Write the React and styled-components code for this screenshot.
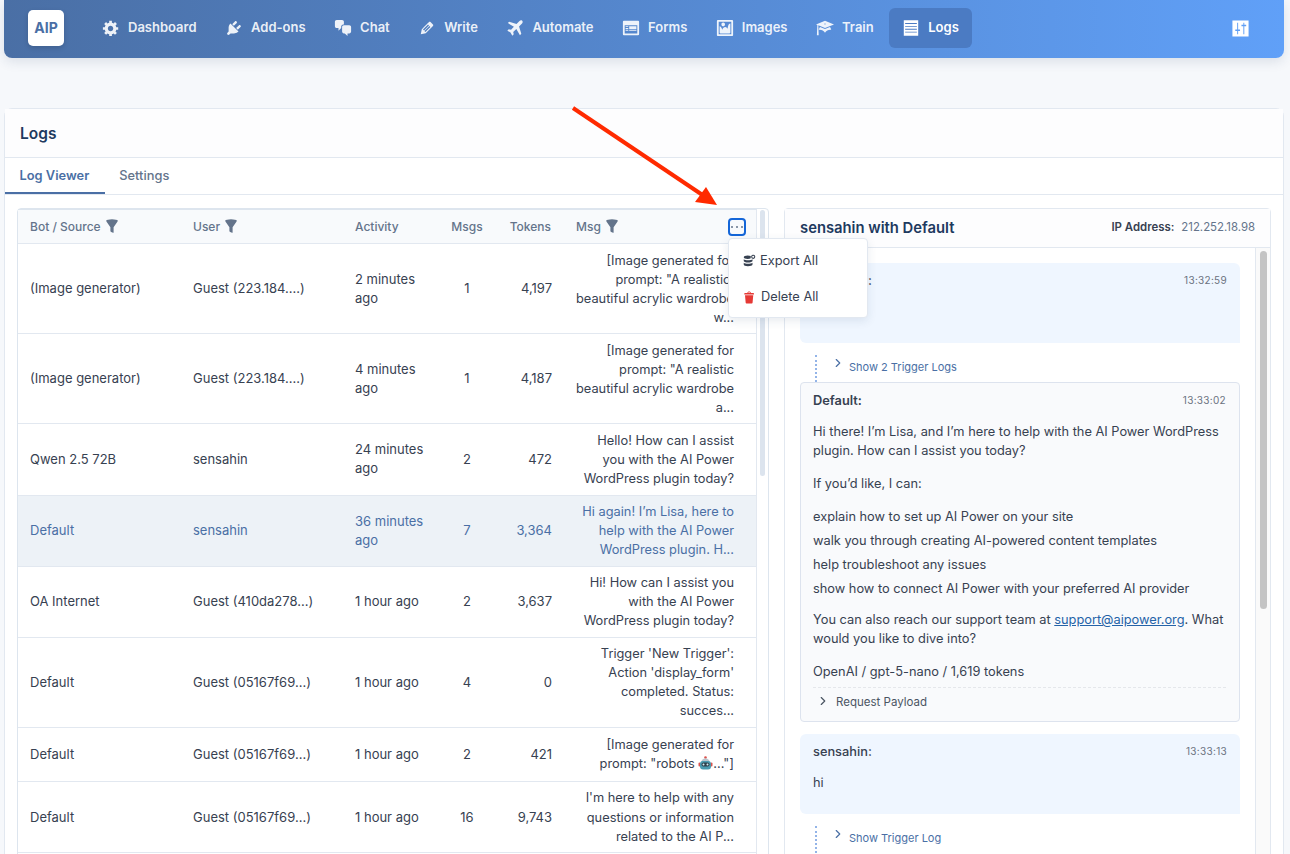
import React from 'react'
import styled, { createGlobalStyle } from 'styled-components'
import { ChevronRight } from 'lucide-react'

const ICONS = {
  gear: 'M18 12h-2.18c-.17.7-.44 1.35-.81 1.93l1.54 1.54-2.1 2.1-1.54-1.54c-.58.36-1.23.63-1.91.79V19H8v-2.18c-.68-.16-1.33-.43-1.91-.79l-1.54 1.54-2.12-2.12 1.54-1.54c-.36-.58-.63-1.23-.79-1.91H1V9.03h2.17c.16-.7.44-1.35.8-1.94L2.43 5.55l2.1-2.1 1.54 1.54c.58-.37 1.24-.64 1.93-.81V2h3v2.18c.68.16 1.33.43 1.91.79l1.54-1.54 2.12 2.12-1.54 1.54c.36.59.64 1.24.8 1.94H18V12zm-8.5 1.5c1.66 0 3-1.34 3-3s-1.34-3-3-3-3 1.34-3 3 1.34 3 3 3z',
  plug: 'M13.11 4.36L9.87 7.6 8 5.73l3.24-3.24c.35-.34 1.05-.2 1.56.32.52.51.66 1.21.31 1.55zm-8 1.77l.91-1.12 9.01 9.01-1.19.84c-.71.71-2.63 1.16-3.82 1.16H6.14L4.9 17.26c-.59.59-1.54.59-2.12 0-.59-.58-.59-1.53 0-2.12l1.24-1.24v-3.88c0-1.13.4-3.19 1.09-3.89zm7.26 3.97l3.24-3.24c.34-.35 1.04-.21 1.55.31.52.51.66 1.21.31 1.55l-3.24 3.25z',
  chat: 'M11 6h-.82C9.07 6 8 7.2 8 8.16V10l-3 3v-3H3c-1.1 0-2-.9-2-2V3c0-1.1.9-2 2-2h6c1.1 0 2 .9 2 2v3zm0 1h6c1.1 0 2 .9 2 2v5c0 1.1-.9 2-2 2h-2v3l-3-3h-1c-1.1 0-2-.9-2-2V9c0-1.1.9-2 2-2z',
  pencil: 'M13.89 3.39l2.71 2.72c.46.46.42 1.24.03 1.64l-8.01 8.02-5.56 1.16 1.16-5.58s7.6-7.63 7.99-8.03c.39-.39 1.22-.39 1.68.07zm-2.73 2.79l-5.59 5.61 1.11 1.11 5.54-5.65zm-2.97 8.23l5.58-5.6-1.07-1.08-5.59 5.6z',
  plane: 'M18 2c-.8-.8-2.2-.6-3 .2L11.700 5.500 3.500 3 2 4.500 8.800 8.500 5.600 12 3 11.400 1.500 13 5 15l2 3.500 1.600-1.500L8 14.400 11.500 11.200 15.500 18 17 16.500 14.500 8.300 17.800 5c.8-.8 1-2.200.2-3z',
  form: 'M2 2h16c.55 0 1 .45 1 1v14c0 .55-.45 1-1 1H2c-.55 0-1-.45-1-1V3c0-.55.45-1 1-1zm15 14V7H3v9h14zM4 8v1h3V8H4zm4 0v3h8V8H8zm-4 2v1h3v-1H4zm0 2v1h3v-1H4zm4 0v1h8v-1H8z',
  image: 'M2.25 1h15.5c.69 0 1.25.56 1.25 1.25v15.5c0 .69-.56 1.25-1.25 1.25H2.25C1.56 19 1 18.44 1 17.75V2.25C1 1.56 1.56 1 2.25 1zM17 17V3H3v14h14zM10 6c0-1.1-.9-2-2-2s-2 .9-2 2 .9 2 2 2 2-.9 2-2zm3 5s0-6 3-6v10c0 .55-.45 1-1 1H5c-.55 0-1-.45-1-1V8c2 0 3 4 3 4s1-3 3-3 3 2 3 2z',
  learn: 'M10 10L2.54 7.02 3 18H1l.48-11.41L0 6l10-4 10 4zm0-5c-.55 0-1 .22-1 .5s.45.5 1 .5 1-.22 1-.5-.45-.5-1-.5zm0 6l5.57-2.23c.71.94 1.2 2.07 1.36 3.3-.3-.04-.61-.07-.93-.07-2.55 0-4.78 1.37-6 3.41C8.78 13.37 6.55 12 4 12c-.32 0-.63.03-.93.07.16-1.23.65-2.36 1.36-3.3z',
  list: 'M2 1.500h16v17H2zM3.500 4.500v1h13v-1zm0 3.200v1h13v-1zm0 3.200v1h13v-1zm0 3.200v1h13v-1z',
  sliders: 'M1.500 1.500h17v17h-17zM6.500 4h1v7h2v1.500h-2V16h-1v-3.500h-2V11h2zM13 4h1v2h2v1.500h-2V16h-1V7.500h-2V6h2z',
  filter: 'M3 4.5v-2s3.34-1 7-1 7 1 7 1v2l-5 7.03v6.97s-1.22-.09-2.25-.59S8 16.5 8 16.5v-4.970z',
  trash: 'M12 4h3c.6 0 1 .4 1 1v1H3V5c0-.6.5-1 1-1h3c.2-1.100 1.300-2 2.500-2s2.300.9 2.500 2zM8 4h3c-.2-.6-.9-1-1.500-1S8.200 3.400 8 4zM4 7h11l-.9 10.100c0 .5-.5.9-1 .9H5.900c-.5 0-.9-.4-1-.9z',
  database: 'M8 2c2 0 3.500.3 4.500 1v3c-1 .7-2.500 1-4.500 1-3 0-5.500-1-5.500-2.500S5 2 8 2zM16 1a3 3 0 1 1 0 6 3 3 0 1 1 0-6zM16 2.500a1.500 1.500 0 1 0 0 3 1.500 1.500 0 1 0 0-3zM2.500 7.500C3.500 8.500 6 9 8.500 9s5.500-.5 6.500-1.500V10c0 1.200-3 2.200-6.500 2.200S2.500 11.200 2.500 10zM2.500 12.500c1 1 3.500 1.500 6 1.500s5.500-.5 6.500-1.500V15c0 1.500-3 2.500-6.500 2.500S2.500 16.500 2.500 15z',
}

const NAV_ITEMS = [
  { label: 'Dashboard', icon: 'gear' },
  { label: 'Add-ons', icon: 'plug' },
  { label: 'Chat', icon: 'chat' },
  { label: 'Write', icon: 'pencil' },
  { label: 'Automate', icon: 'plane' },
  { label: 'Forms', icon: 'form' },
  { label: 'Images', icon: 'image' },
  { label: 'Train', icon: 'learn' },
  { label: 'Logs', icon: 'list', active: true },
]

const RobotFace = () => (
  <svg width="15" height="14" viewBox="0 0 15 14" style={{ verticalAlign: '-2px' }}>
    <circle cx="7.500" cy="1.500" r="1.300" fill="#d9534f" />
    <path d="M3 7a4.500 4.500 0 0 1 9 0z" fill="#b9c4cc" />
    <rect x="0.500" y="6.500" width="2" height="4" rx="1" fill="#d9534f" />
    <rect x="12.500" y="6.500" width="2" height="4" rx="1" fill="#d9534f" />
    <rect x="2" y="5" width="11" height="8.500" rx="3" fill="#4a9bb0" />
    <rect x="3.500" y="6.500" width="8" height="4" rx="2" fill="#2f3f4a" />
    <circle cx="5.500" cy="8.500" r="1" fill="#cfeef5" />
    <circle cx="9.500" cy="8.500" r="1" fill="#cfeef5" />
  </svg>
)

const ROWS = [
  { bot: '(Image generator)', user: 'Guest (223.184....)', activity: '2 minutes ago', msgs: '1', tokens: '4,197', msg: '[Image generated for prompt: "A realistic, beautiful acrylic wardrobe w...' },
  { bot: '(Image generator)', user: 'Guest (223.184....)', activity: '4 minutes ago', msgs: '1', tokens: '4,187', msg: '[Image generated for prompt: "A realistic beautiful acrylic wardrobe a...' },
  { bot: 'Qwen 2.5 72B', user: 'sensahin', activity: '24 minutes ago', msgs: '2', tokens: '472', msg: 'Hello! How can I assist you with the AI Power WordPress plugin today?' },
  { bot: 'Default', user: 'sensahin', activity: '36 minutes ago', msgs: '7', tokens: '3,364', msg: 'Hi again! I’m Lisa, here to help with the AI Power WordPress plugin. H...', selected: true },
  { bot: 'OA Internet', user: 'Guest (410da278...)', activity: '1 hour ago', msgs: '2', tokens: '3,637', msg: 'Hi! How can I assist you with the AI Power WordPress plugin today?' },
  { bot: 'Default', user: 'Guest (05167f69...)', activity: '1 hour ago', msgs: '4', tokens: '0', msg: "Trigger 'New Trigger': Action 'display_form' completed. Status: succes..." },
  { bot: 'Default', user: 'Guest (05167f69...)', activity: '1 hour ago', msgs: '2', tokens: '421', msg: <>[Image generated for prompt: "robots <RobotFace />..."]</> },
  { bot: 'Default', user: 'Guest (05167f69...)', activity: '1 hour ago', msgs: '16', tokens: '9,743', msg: "I'm here to help with any questions or information related to the AI P..." },
]

const GlobalStyle = createGlobalStyle`
  html, body {
    margin: 0;
    padding: 0;
    background: #f6f8fb;
  }
  * {
    box-sizing: border-box;
  }
`

const Page = styled.div`
  position: relative;
  height: 854px;
  overflow: hidden;
  padding: 0 6px 0 4px;
  font-family: Inter, "Liberation Sans", sans-serif;
  font-size: 13px;
  line-height: 19.05px;
  color: #374151;
`

const Navbar = styled.header`
  display: flex;
  align-items: center;
  height: 58px;
  padding: 0 34px 2px 24px;
  border-radius: 0 0 8px 8px;
  background: linear-gradient(90deg, #4a6fa5 0%, #60a0f8 100%);
  box-shadow: 0 4px 12px rgba(30, 58, 95, 0.12);
`

const Logo = styled.div`
  display: flex;
  align-items: center;
  justify-content: center;
  width: 36px;
  height: 36px;
  margin-right: 24.5px;
  border-radius: 5px;
  background: #fff;
  color: #4a6fa5;
  font-size: 14px;
  font-weight: 700;
  box-shadow: 0 2px 5px rgba(0, 0, 0, 0.15);
`

const NavList = styled.nav`
  display: flex;
  align-items: center;
  gap: 1.5px;
  flex: 1;
`

const NavItem = styled.a`
  display: flex;
  align-items: center;
  gap: 8px;
  height: 40px;
  padding: 0 13.5px;
  border-radius: 6px;
  background: ${p => (p.$active ? '#4b7bc3' : 'transparent')};
  color: ${p => (p.$active ? '#fff' : 'rgba(255, 255, 255, 0.9)')};
  font-size: 13px;
  font-weight: 600;
`

const Card = styled.section`
  margin-top: 50px;
  border: 1px solid #e2e8f0;
  border-radius: 8px 8px 0 0;
  background: #fff;
`

const CardTitle = styled.h1`
  margin: 0;
  height: 49px;
  padding: 0 15px;
  border-bottom: 1px solid #e2e8f0;
  background: #fdfdfe;
  color: #1e3a5f;
  font-size: 15.5px;
  font-weight: 600;
  line-height: 49px;
`

const Tabs = styled.div`
  display: flex;
  height: 37px;
  border-bottom: 1px solid #e2e8f0;
`

const Tab = styled.div`
  height: 36px;
  padding: 0 15.5px 0 14.5px;
  border-bottom: 2px solid ${p => (p.$active ? '#4a6fa5' : 'transparent')};
  color: ${p => (p.$active ? '#4a6fa5' : '#64748b')};
  font-size: 12.85px;
  font-weight: ${p => (p.$active ? 600 : 500)};
  line-height: 35px;
`

const Content = styled.div`
  display: flex;
  gap: 15px;
  padding: 13px 12px 0;
`

const LeftPanel = styled.div`
  position: relative;
  display: flex;
  flex: none;
  width: 752px;
  border: 1px solid #dde5ee;
  border-radius: 4px 4px 0 0;
`

const Table = styled.div`
  width: 739px;
  border-top: 1px solid #dde5ee;
  border-right: 1px solid #e2e8f0;
`

const TableHead = styled.div`
  position: relative;
  display: grid;
  grid-template-columns: 163px 162px 96px 56px 69px 1fr;
  align-items: center;
  height: 34px;
  border-bottom: 1px solid #e2e8f0;
  background: #f8fafc;
  color: #64748b;
  font-size: 12px;
  font-weight: 500;
`

const HeadCell = styled.div`
  display: flex;
  align-items: center;
  justify-content: ${p => (p.$align === 'center' ? 'center' : p.$align === 'right' ? 'flex-end' : 'flex-start')};
  gap: 3px;
  padding: 0 ${p => (p.$align === 'center' ? '0' : p.$align === 'right' ? '13px' : '12px')};
`

const TableRow = styled.div`
  display: grid;
  grid-template-columns: 163px 162px 96px 56px 69px 1fr;
  align-items: center;
  min-height: 54px;
  border-bottom: 1px solid #e2e8f0;
  background: ${p => (p.$selected ? '#edf2f7' : '#fff')};
  color: ${p => (p.$selected ? '#4a6fa5' : '#374151')};
`

const Cell = styled.div`
  padding: 6.5px 12px;
  text-align: ${p => p.$align || 'left'};
`

const MsgCell = styled.div`
  padding: 6.5px 22px 6.5px 11px;
  font-size: 12.8px;
  text-align: right;
`

const ActionsButton = styled.button`
  position: absolute;
  top: 8px;
  left: 710px;
  display: flex;
  align-items: center;
  justify-content: center;
  gap: 2.5px;
  width: 18px;
  height: 18px;
  padding: 0;
  border: 2px solid #1466d8;
  border-radius: 4px;
  background: transparent;
`

const Dot = styled.span`
  flex: none;
  width: 2.5px;
  height: 2.5px;
  border-radius: 50%;
  background: #64748b;
`

const Rail = styled.div`
  flex: none;
  width: 11px;
  padding: 1px 3px 0;
`

const RailThumb = styled.div`
  width: 5px;
  height: 266px;
  border-radius: 3px;
  background: #dce4ee;
`

const Menu = styled.div`
  position: absolute;
  top: 29px;
  left: 710px;
  width: 140px;
  height: 80px;
  padding: 4px 0;
  border: 1px solid #e2e8f0;
  border-radius: 4px;
  background: #fff;
  box-shadow: 0 3px 10px rgba(30, 58, 95, 0.1);
  z-index: 2;
`

const MenuItem = styled.div`
  display: flex;
  align-items: center;
  gap: 4px;
  height: 36px;
  padding: 0 13px;
  color: #374151;
  font-size: 12.8px;
`

const RightPanel = styled.div`
  flex: 1;
  border: 1px solid #e2e8f0;
  border-radius: 4px 4px 0 0;
  height: 700px;
`

const PanelHeader = styled.div`
  display: flex;
  align-items: center;
  justify-content: space-between;
  height: 39px;
  padding: 0 15px;
  border-bottom: 1px solid #e2e8f0;
  background: #fdfdfe;
`

const PanelTitle = styled.h2`
  margin: 1px 0 0;
  color: #1e3a5f;
  font-size: 14.8px;
  font-weight: 600;
`

const IpBlock = styled.div`
  display: flex;
  gap: 7px;
  font-size: 11.4px;
  color: #64748b;
`

const IpLabel = styled.span`
  color: #374151;
  font-weight: 600;
`

const PanelBody = styled.div`
  display: flex;
`

const Thread = styled.div`
  flex: 1;
  padding: 15px 15px 0;
  font-size: 12.8px;
  line-height: 19px;
`

const ScrollTrack = styled.div`
  flex: none;
  width: 15px;
  height: 640px;
  padding: 3px 3px 0 4px;
  border-left: 1px solid #e2e8f0;
  background: #fafafa;
`

const ScrollThumb = styled.div`
  height: 358px;
  border-radius: 4px;
  background: #c4c4c4;
`

const UserBubble = styled.div`
  height: 80px;
  padding: 8px 13px;
  border-radius: 6px 6px 0 6px;
  background: #eff6ff;
`

const BotBox = styled.div`
  height: 340px;
  margin-bottom: 12px;
  padding: 8px 13px 8px 12px;
  border: 1px solid #dde3ee;
  border-radius: 4px;
  background: #f9fafc;
`

const MessageHead = styled.div`
  display: flex;
  align-items: center;
  justify-content: space-between;
  margin-bottom: ${p => (p.$bot ? '12px' : '11.5px')};
  font-weight: ${p => (p.$bot ? 600 : 500)};
`

const Time = styled.span`
  color: #6b7280;
  font-size: 10px;
  font-weight: 400;
  letter-spacing: 0.3px;
`

const Para = styled.p`
  margin: 0 0 14px;
`

const PlainList = styled.ul`
  margin: 0 0 12px;
  padding: 0;
  list-style: none;
`

const PlainItem = styled.li`
  margin-bottom: 5px;
`

const MailLink = styled.a`
  color: #2563a8;
  text-decoration: underline;
`

const PayloadRow = styled.div`
  display: flex;
  align-items: center;
  gap: 6px;
  margin-top: -8px;
  padding: 5px 0 0 3px;
  border-top: 1px dashed #e5e7eb;
  color: #4b5563;
  font-size: 11.5px;
`

const TriggerRow = styled.div`
  display: flex;
  align-items: center;
  gap: 4.5px;
  height: 27px;
  margin: 12px 0 0 15px;
  padding: 0 0 3px 13.5px;
  border-left: 2px dotted #93b4e8;
  color: #4a6fa5;
  font-size: 11px;
`

const Chevron = styled(ChevronRight)`
  flex: none;
  margin-bottom: ${p => p.$raise}px;
`

const Annotation = styled.svg`
  position: absolute;
  top: 0;
  left: 0;
  width: 1290px;
  height: 854px;
  pointer-events: none;
  z-index: 3;
`

const Icon = ({ name, size = 18, color = 'currentColor' }) => (
  <svg width={size} height={size} viewBox="0 0 20 20" fill={color} fillRule="evenodd" style={{ flex: 'none' }}>
    <path d={ICONS[name]} />
  </svg>
)

const App = () => {
  return (
    <Page>
      <GlobalStyle />
      <Navbar>
        <Logo>AIP</Logo>
        <NavList>
          {NAV_ITEMS.map(item => (
            <NavItem key={item.label} $active={item.active}>
              <Icon name={item.icon} />
              {item.label}
            </NavItem>
          ))}
        </NavList>
        <Icon name="sliders" size={19} color="#fff" />
      </Navbar>

      <Card>
        <CardTitle>Logs</CardTitle>
        <Tabs>
          <Tab $active>Log Viewer</Tab>
          <Tab>Settings</Tab>
        </Tabs>
        <Content>
          <LeftPanel>
            <Table>
              <TableHead>
                <HeadCell>Bot / Source <Icon name="filter" size={16} /></HeadCell>
                <HeadCell>User <Icon name="filter" size={16} /></HeadCell>
                <HeadCell>Activity</HeadCell>
                <HeadCell $align="center">Msgs</HeadCell>
                <HeadCell $align="right">Tokens</HeadCell>
                <HeadCell>Msg <Icon name="filter" size={16} /></HeadCell>
                <ActionsButton aria-label="Actions"><Dot /><Dot /><Dot /></ActionsButton>
              </TableHead>
              {ROWS.map((row, i) => (
                <TableRow key={i} $selected={row.selected}>
                  <Cell>{row.bot}</Cell>
                  <Cell>{row.user}</Cell>
                  <Cell>{row.activity}</Cell>
                  <Cell $align="center">{row.msgs}</Cell>
                  <Cell $align="right">{row.tokens}</Cell>
                  <MsgCell>{row.msg}</MsgCell>
                </TableRow>
              ))}
            </Table>
            <Rail><RailThumb /></Rail>
            <Menu>
              <MenuItem><Icon name="database" size={14} color="#374151" /> Export All</MenuItem>
              <MenuItem><Icon name="trash" size={15} color="#e53935" /> Delete All</MenuItem>
            </Menu>
          </LeftPanel>

          <RightPanel>
            <PanelHeader>
              <PanelTitle>sensahin with Default</PanelTitle>
              <IpBlock><IpLabel>IP Address:</IpLabel> 212.252.18.98</IpBlock>
            </PanelHeader>
            <PanelBody>
              <Thread>
                <UserBubble>
                  <MessageHead>sensahin: <Time>13:32:59</Time></MessageHead>
                </UserBubble>
                <TriggerRow><Chevron size={14} $raise={8} /> Show 2 Trigger Logs</TriggerRow>
                <BotBox>
                  <MessageHead $bot>Default: <Time>13:33:02</Time></MessageHead>
                  <Para>Hi there! I’m Lisa, and I’m here to help with the AI Power WordPress plugin. How can I assist you today?</Para>
                  <Para>If you’d like, I can:</Para>
                  <PlainList>
                    <PlainItem>explain how to set up AI Power on your site</PlainItem>
                    <PlainItem>walk you through creating AI-powered content templates</PlainItem>
                    <PlainItem>help troubleshoot any issues</PlainItem>
                    <PlainItem>show how to connect AI Power with your preferred AI provider</PlainItem>
                  </PlainList>
                  <Para>You can also reach our support team at <MailLink>support@aipower.org</MailLink>. What would you like to dive into?</Para>
                  <Para>OpenAI / gpt-5-nano / 1,619 tokens</Para>
                  <PayloadRow><Chevron size={14} $raise={4} /> Request Payload</PayloadRow>
                </BotBox>
                <UserBubble>
                  <MessageHead>sensahin: <Time>13:33:13</Time></MessageHead>
                  <Para>hi</Para>
                </UserBubble>
                <TriggerRow><Chevron size={14} $raise={8} /> Show Trigger Log</TriggerRow>
              </Thread>
              <ScrollTrack><ScrollThumb /></ScrollTrack>
            </PanelBody>
          </RightPanel>
        </Content>
      </Card>

      <Annotation viewBox="0 0 1290 854">
        <line x1="573" y1="108" x2="704" y2="196" stroke="#ff2a00" strokeWidth="4" />
        <polygon points="717,205 695,202 706,187" fill="#ff2a00" />
      </Annotation>
    </Page>
  )
}

export default App
